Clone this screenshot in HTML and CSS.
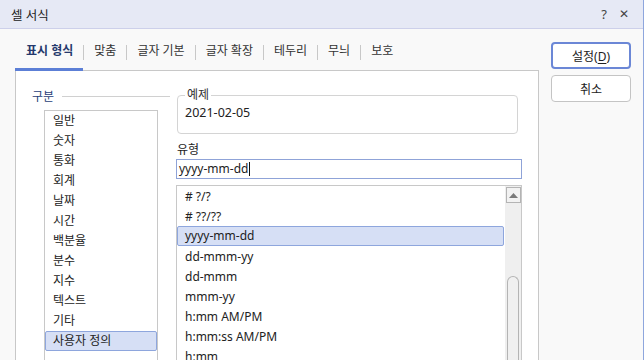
FILE: index.html
```html
<!DOCTYPE html>
<html lang="ko">
  <head>
    <meta charset="UTF-8" />
    <meta name="viewport" content="width=device-width, initial-scale=1" />
    <title>셀 서식</title>
    <link rel="stylesheet" href="styles.css">
  </head>
  <body>
    <div class="window">
      <!-- 제목 표시줄 -->
      <header class="titlebar">
        <span class="title">셀 서식</span>
        <div class="title-buttons">
          <span class="title-btn">?</span>
          <span class="title-btn close">✕</span>
        </div>
      </header>

      <div class="content">
        <div class="main">
          <!-- 탭 -->
          <nav class="tabs">
            <span class="tab active">표시 형식</span>
            <span class="sep"></span>
            <span class="tab">맞춤</span>
            <span class="sep"></span>
            <span class="tab">글자 기본</span>
            <span class="sep"></span>
            <span class="tab">글자 확장</span>
            <span class="sep"></span>
            <span class="tab">테두리</span>
            <span class="sep"></span>
            <span class="tab">무늬</span>
            <span class="sep"></span>
            <span class="tab">보호</span>
          </nav>

          <div class="panel">
            <!-- 구분 -->
            <section class="category">
              <div class="group-label">
                <span>구분</span>
                <span class="rule"></span>
              </div>
              <ul class="list category-list">
                <li>일반</li>
                <li>숫자</li>
                <li>통화</li>
                <li>회계</li>
                <li>날짜</li>
                <li>시간</li>
                <li>백분율</li>
                <li>분수</li>
                <li>지수</li>
                <li>텍스트</li>
                <li>기타</li>
                <li class="selected">사용자 정의</li>
              </ul>
            </section>

            <!-- 예제 / 유형 -->
            <section class="detail">
              <fieldset class="sample">
                <legend>예제</legend>
                <div class="sample-value">2021-02-05</div>
              </fieldset>

              <div class="field-label">유형</div>
              <div class="type-input">yyyy-mm-dd<span class="caret"></span></div>

              <div class="format-box">
                <ul class="list format-list">
                  <li># ?/?</li>
                  <li># ??/??</li>
                  <li class="selected">yyyy-mm-dd</li>
                  <li>dd-mmm-yy</li>
                  <li>dd-mmm</li>
                  <li>mmm-yy</li>
                  <li>h:mm AM/PM</li>
                  <li>h:mm:ss AM/PM</li>
                  <li>h:mm</li>
                </ul>
                <div class="scrollbar">
                  <div class="scroll-up">
                    <svg width="9" height="5" viewBox="0 0 9 5"><path d="M0 5 L4.5 0 L9 5 Z" fill="#7a7a7a"/></svg>
                  </div>
                  <div class="scroll-thumb"></div>
                </div>
              </div>
            </section>
          </div>
        </div>

        <!-- 버튼 -->
        <aside class="actions">
          <button type="button" class="btn primary">설정(<u>D</u>)</button>
          <button type="button" class="btn">취소</button>
        </aside>
      </div>
    </div>
  </body>
</html>
```

FILE: styles.css
```css
* {
  box-sizing: border-box;
}

body {
  margin: 0;
  font-family: "Noto Sans", "Noto Sans CJK KR", sans-serif;
  font-size: 12px;
  color: #222;
}

.window {
  width: 644px;
  height: 360px;
  overflow: hidden;
  background: #f9f9f9;
  border-right: 1px solid #8ea6dd;
}

/* 제목 표시줄 */
.titlebar {
  height: 29px;
  display: flex;
  align-items: center;
  justify-content: space-between;
  padding: 0 14px 0 11px;
  background: #e6e9f5;
  border-bottom: 1px solid #cdd0ea;
}
.title {
  font-size: 12.5px;
  color: #222;
}
.title-buttons {
  display: flex;
  gap: 12px;
  color: #444;
  font-size: 13px;
}
.title-btn.close {
  font-size: 12px;
}

.content {
  display: flex;
}

.main {
  width: 539px;
  padding-left: 15px;
}

/* 탭 */
.tabs {
  height: 42px;
  display: flex;
  align-items: stretch;
  margin-bottom: -1px;
  position: relative;
}
.tab {
  display: flex;
  align-items: center;
  padding: 2px 10px 0;
  color: #333;
  border-bottom: 3px solid transparent;
}
.tab.active {
  padding: 2px 10px 0 11px;
  color: #24386c;
  font-weight: 600;
  border-bottom-color: #5c7fd6;
}
.sep {
  width: 1px;
  height: 15px;
  margin-top: 16px;
  background: #c8c8c8;
}

.panel {
  height: 300px;
  display: flex;
  background: #fff;
  border: 1px solid #c8c8c8;
  border-bottom: none;
}

/* 구분 */
.category {
  width: 160px;
}
.group-label {
  display: flex;
  align-items: center;
  height: 16px;
  margin-top: 17px;
  padding-left: 16px;
  color: #2a3f78;
}
.group-label .rule {
  flex: 1;
  height: 1px;
  margin: 1px 6px 0 8px;
  background: #d0d0d0;
}

.list {
  list-style: none;
  margin: 0;
  padding: 0;
}
.list li {
  height: 20px;
  line-height: 20px;
  padding-left: 8px;
  white-space: nowrap;
}
.list li.selected {
  background: #d6dff5;
  border: 1px solid #8ea6dd;
  border-radius: 2px;
  line-height: 18px;
  padding-left: 7px;
}

.category-list {
  width: 114px;
  height: 260px;
  margin: 6px 0 0 28px;
  border: 1px solid #c8c8c8;
}

/* 예제 / 유형 */
.detail {
  width: 346px;
}
.sample {
  margin: 16px 4px 0 1px;
  padding: 0 8px 10px 7px;
  height: 47px;
  border: 1px solid #d4d4d4;
  border-radius: 4px;
}
.sample legend {
  padding: 0 2px;
  line-height: 16px;
  color: #333;
}
.sample-value {
  line-height: 16px;
  padding-top: 2px;
  font-size: 12.5px;
}

.field-label {
  margin-top: 8px;
  line-height: 16px;
  padding-left: 1px;
}
.type-input {
  height: 20px;
  margin-top: 1px;
  padding-left: 2px;
  line-height: 18px;
  border: 1px solid #8fa3d8;
  background: #fff;
  display: flex;
  align-items: center;
}
.caret {
  width: 1px;
  height: 14px;
  margin-left: 1px;
  background: #111;
}

.format-box {
  display: flex;
  height: 200px;
  margin-top: 6px;
  border: 1px solid #c8c8c8;
}
.format-list {
  flex: 1;
  margin-right: 1px;
}
.format-list li {
  line-height: 21px;
}
.scrollbar {
  width: 16px;
  background: #efefef;
  display: flex;
  flex-direction: column;
  align-items: center;
  padding-top: 1px;
}
.scroll-up {
  width: 15px;
  height: 16px;
  border: 1px solid #b4b4b4;
  background: #f2f2f2;
  display: flex;
  align-items: center;
  justify-content: center;
}
.scroll-thumb {
  width: 12px;
  flex: 1;
  margin-top: 73px;
  border: 1px solid #b4b4b4;
  border-bottom: none;
  border-radius: 6px 6px 0 0;
  background: #f0f0f0;
}

/* 버튼 */
.actions {
  display: flex;
  flex-direction: column;
  gap: 6px;
  padding: 13px 0 0 12px;
}
.btn {
  width: 80px;
  height: 27px;
  font: inherit;
  color: #222;
  background: #fff;
  border: 1px solid #c4c4c4;
  border-radius: 4px;
  padding: 0;
}
.btn.primary {
  height: 27px;
  border: 2px solid #6b87d6;
}
.btn u {
  text-underline-offset: 2px;
}
```
